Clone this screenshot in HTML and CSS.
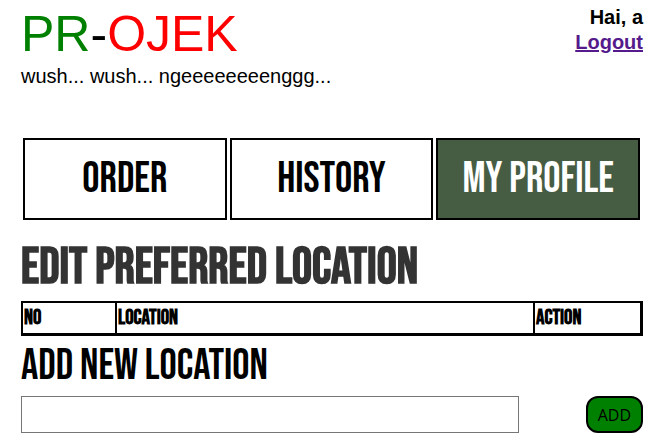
FILE: index.html
```html
<!DOCTYPE html>
<html lang="en">
<head>
<meta charset="utf-8">
<title>PR-OJEK</title>
<link rel="stylesheet" href="styles.css">
</head>
<body>
<header class="header">
  <div>
    <h1 class="logo"><span class="logo-green">PR</span>-<span class="logo-red">OJEK</span></h1>
    <p class="tagline">wush... wush... ngeeeeeeeenggg...</p>
  </div>
  <div class="user">
    <div class="greeting">Hai, a</div>
    <a href="#">Logout</a>
  </div>
</header>
<nav class="tabs">
  <a class="tab" href="#">ORDER</a>
  <a class="tab" href="#">HISTORY</a>
  <a class="tab active" href="#">MY PROFILE</a>
</nav>
<main>
  <h2 class="title">EDIT PREFERRED LOCATION</h2>
  <table class="locations">
    <thead>
      <tr><th class="no">NO</th><th>LOCATION</th><th class="action">ACTION</th></tr>
    </thead>
  </table>
  <form class="add">
    <label class="subtitle" for="location">ADD NEW LOCATION</label>
    <div class="row">
      <input class="field" type="text" id="location">
      <button class="button" type="button">ADD</button>
    </div>
  </form>
</main>
</body>
</html>
```
FILE: styles.css
```css
* { box-sizing: border-box; }

body {
  margin: 0;
  padding: 4px 24px 8px 21px;
  background: #fff;
  color: #000;
  font-family: "Liberation Sans", Arial, sans-serif;
  font-size: 20px;
}

.header {
  display: flex;
  justify-content: space-between;
}

.logo {
  margin: 0;
  font-size: 50px;
  font-weight: 400;
  line-height: 60px;
}

.logo-green { color: green; }
.logo-red { color: red; }

.tagline {
  margin: 0;
  line-height: 24px;
}

.user {
  padding-top: 1px;
  font-weight: 700;
  line-height: 25px;
  text-align: right;
}

.user a { color: #551a8b; }

.tabs {
  display: flex;
  gap: 3px;
  margin: 50px 3px 0 2px;
}

.tab {
  flex: 1 1 0;
  border: 2px solid #000;
  color: #000;
  font-family: "Bebas Neue", "Liberation Sans Narrow", "Liberation Sans", sans-serif;
  font-size: 43px;
  font-weight: 400;
  line-height: 78px;
  text-align: center;
  text-decoration: none;
  white-space: nowrap;
}

.tab.active {
  background: #465c43;
  color: #fff;
}

.title,
.subtitle,
.locations {
  font-family: "Bebas Neue", "Liberation Sans Narrow", "Liberation Sans", sans-serif;
}

.title {
  margin: 28px 0 13px;
  color: #333;
  font-size: 50px;
  font-weight: 700;
  line-height: 40px;
}

.locations {
  width: 100%;
  border: 2px solid #000;
  border-width: 2px 3px 3px 2px;
  border-spacing: 0;
  table-layout: fixed;
  font-size: 21px;
  line-height: 28px;
  text-align: left;
}

.locations th {
  padding: 1px;
  font-weight: 700;
}

.locations th + th { border-left: 2px solid #000; }
.locations .no { width: 92px; }
.locations .action { width: 107px; }

.subtitle {
  display: block;
  padding: 10px 0;
  font-size: 43px;
  font-weight: 400;
  line-height: 40px;
}

.row {
  display: flex;
  justify-content: space-between;
}

.field {
  width: 80%;
  height: 37px;
  padding: 4px 8px;
  border: 1px solid #767676;
  font: inherit;
}

.button {
  padding: 0 10px;
  border: 2px solid #000;
  border-radius: 12px;
  background: green;
  color: #000;
  font-family: "Open Sans", "Noto Sans", sans-serif;
  font-size: 16px;
}
```
